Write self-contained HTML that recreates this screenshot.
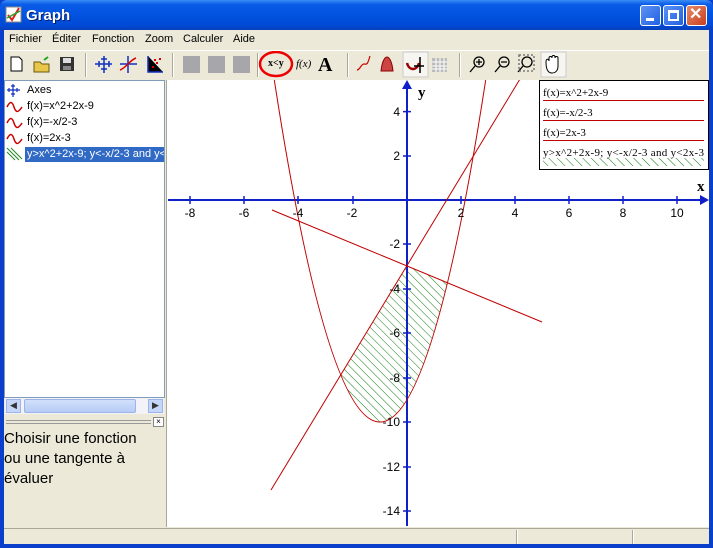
<!DOCTYPE html>
<html><head><meta charset="utf-8"><style>
*{margin:0;padding:0;box-sizing:border-box}
body{width:713px;height:548px;overflow:hidden;background:#0A3FCC;font-family:"Liberation Sans",sans-serif;position:relative}
.abs{position:absolute}
#title{left:0;top:0;width:713px;height:30px;background:linear-gradient(#3A8CF5 0%,#0A5BE8 15%,#0254E0 50%,#0049D6 85%,#0A3FB8 100%);border-radius:7px 7px 0 0}
#title .t{left:26px;top:7px;color:#fff;font-weight:bold;font-size:15px;text-shadow:1px 1px #0a1e6e}
.btn{top:5px;width:21px;height:21px;border:1px solid #fff;border-radius:3px;background:linear-gradient(135deg,#5d93f5,#2260e0)}
#client{left:4px;top:30px;width:705px;height:514px;background:#ECE9D8}
#menu{left:4px;top:30px;width:705px;height:19px;background:#ECE9D8;font-size:11px;color:#000}
#menu span{position:absolute;top:3px}
#tb{left:4px;top:50px;width:705px;height:29px;background:#ECE9D8;border-top:1px solid #fff}
.sep{top:53px;width:2px;height:24px;border-left:1px solid #ACA899;border-right:1px solid #fff}
.gs{top:56px;width:17px;height:17px;background:#A7A6AA}
#list{left:4px;top:80px;width:161px;height:318px;background:#fff;border:1px solid #7F9DB9;font-size:11px}
#list div{position:absolute;left:22px}
#plot{left:166px;top:80px;width:543px;height:447px;background:#fff;border-left:1px solid #ACA899}
#status{left:4px;top:528px;width:705px;height:16px;background:#ECE9D8;border-top:1px solid #ACA899}
</style></head><body>
<div id="title" class="abs">
<svg class="abs" style="left:5px;top:6px" width="17" height="17"><rect x="1" y="1" width="15" height="15" fill="#fff" stroke="#888"/><path d="M3 9 L7 14 L14 2" stroke="#d22" stroke-width="2" fill="none"/><path d="M2 12 L15 5" stroke="#2a2" stroke-width="1.5"/></svg>
<div class="abs t">Graph</div>
<div class="abs btn" style="left:640px"><div class="abs" style="left:5px;top:12px;width:8px;height:3px;background:#fff"></div></div>
<div class="abs btn" style="left:663px"><div class="abs" style="left:4px;top:4px;width:11px;height:11px;border:2px solid #fff;border-top-width:3px"></div></div>
<div class="abs btn" style="left:686px;background:linear-gradient(135deg,#e88a6a,#c8401e)"><div class="abs" style="left:2px;top:-2px;color:#fff;font-weight:bold;font-size:16px">✕</div></div>
</div>
<div id="client" class="abs"></div>
<div id="menu" class="abs"><span style="left:5px">Fichier</span><span style="left:48px">Éditer</span><span style="left:88px">Fonction</span><span style="left:141px">Zoom</span><span style="left:179px">Calculer</span><span style="left:229px">Aide</span></div>
<div id="tb" class="abs"></div>
<svg class="abs" style="left:0;top:50px" width="713" height="30">
<path d="M11 7h8l3 3v11h-11z" fill="#fff" stroke="#000"/>
<path d="M34 12h6l2 2h7v8h-15z" fill="#e8c64a" stroke="#6a5a10"/><path d="M44 10l4-3" stroke="#2a2" stroke-width="2"/>
<rect x="60" y="7" width="14" height="14" fill="#333"/><rect x="63" y="8" width="8" height="5" fill="#ddd"/><rect x="63" y="16" width="8" height="4" fill="#888"/>
<g stroke="#1030c0" stroke-width="1.5"><path d="M104 6v17M95 14h17M101 9h6M101 19h6M99 11v6M109 11v6"/></g>
<g stroke="#1030c0" stroke-width="1.5"><path d="M128 6v17M120 14h17"/></g><path d="M120 20C126 18 130 10 136 8" stroke="#d00" fill="none" stroke-width="1.5"/>
<g stroke="#1030c0" stroke-width="1.5"><path d="M148 6v16h15"/></g><g fill="#d00"><rect x="152" y="16" width="2" height="2"/><rect x="156" y="12" width="2" height="2"/><rect x="159" y="8" width="2" height="2"/><rect x="154" y="9" width="2" height="2"/></g>
<path d="M357 20c3 0 4-6 7-6s3 2 6-8" stroke="#c00" fill="none" stroke-width="1.2"/>
<path d="M381 21c1-10 4-14 6-14s5 4 6 14z" fill="#c44" stroke="#800"/>
<rect x="403" y="2" width="25" height="25" fill="#f6f5f0" stroke="#ccc"/>
<path d="M407 13c2 8 10 8 12 0" stroke="#900" stroke-width="2.5" fill="none"/><path d="M420 7v16M414 16h10" stroke="#000" stroke-width="1.5"/>
<rect x="432" y="8" width="15" height="14" fill="#bbb"/><g stroke="#fff"><path d="M432 12h15M432 16h15M432 19h15M436 8v14M440 8v14M444 8v14"/></g>
<g stroke="#000" stroke-width="1.3" fill="none"><circle cx="479" cy="12" r="5"/><path d="M475 16l-5 6M476 12h6M479 9v6"/><circle cx="504" cy="12" r="5"/><path d="M500 16l-5 6M501 12h6"/><circle cx="527" cy="12" r="5"/><path d="M523 16l-5 6"/><rect x="519" y="5" width="15" height="16" stroke-dasharray="2 2" stroke="#666"/></g>
<rect x="541" y="2" width="25" height="25" fill="#f6f5f0" stroke="#ccc"/><path d="M546 12c0-4 3-3 3-1v-3c0-2 3-2 3 0v-1c0-2 3-2 3 0v1c0-2 3-2 3 0v8c0 4-2 7-6 7s-6-4-6-11z" fill="#fff" stroke="#000"/>
</svg>
<div class="abs sep" style="left:85px"></div><div class="abs sep" style="left:172px"></div><div class="abs sep" style="left:257px"></div><div class="abs sep" style="left:347px"></div><div class="abs sep" style="left:459px"></div>
<div class="abs gs" style="left:183px"></div><div class="abs gs" style="left:208px"></div><div class="abs gs" style="left:233px"></div>
<div class="abs" style="left:268px;top:58px;font-family:'Liberation Serif',serif;font-size:10px;font-weight:bold">x&lt;y</div>
<svg class="abs" style="left:258px;top:51px" width="40" height="28"><ellipse cx="18" cy="13" rx="16" ry="12" fill="none" stroke="#e00" stroke-width="2.5"/></svg>
<div class="abs" style="left:296px;top:58px;font-family:'Liberation Serif',serif;font-style:italic;font-size:11px">f(x)</div>
<div class="abs" style="left:318px;top:54px;font-family:'Liberation Serif',serif;font-weight:bold;font-size:20px">A</div>

<div id="list" class="abs">
<svg class="abs" style="left:1px;top:2px" width="18" height="80"><g stroke="#1030c0" stroke-width="1.2"><path d="M7 1v13M1 7h13M5 3h4M5 11h4M3 5v4M11 5v4"/></g><g stroke="#c00" stroke-width="1.5" fill="none"><path d="M1 24c3-6 5-6 7 0s4 6 8 0"/><path d="M1 40c3-6 5-6 7 0s4 6 8 0"/><path d="M1 56c3-6 5-6 7 0s4 6 8 0"/></g><g stroke="#282" ><path d="M1 65l12 12M5 65l11 11M1 69l8 8"/></g></svg>
<div style="top:3px">Axes</div><div style="top:19px">f(x)=x^2+2x-9</div><div style="top:35px">f(x)=-x/2-3</div><div style="top:51px">f(x)=2x-3</div>
<div style="top:66px;left:20px;width:139px;height:15px;background:#316AC5;color:#fff;white-space:nowrap;overflow:hidden;padding-left:2px;line-height:15px">y&gt;x^2+2x-9; y&lt;-x/2-3 and y&lt;2x-3</div>
</div>
<div class="abs" style="left:5px;top:398px;width:159px;height:16px;background:#F3F2F8">
<div class="abs" style="left:1px;top:1px;width:15px;height:14px;background:#C6D6F9;border:1px solid #9DB4E8;font-size:9px;text-align:center;color:#333">◀</div>
<div class="abs" style="left:19px;top:1px;width:112px;height:14px;background:linear-gradient(#D2E0FB,#B6CCF6);border:1px solid #9DB4E8;border-radius:2px"></div>
<div class="abs" style="left:143px;top:1px;width:15px;height:14px;background:#C6D6F9;border:1px solid #9DB4E8;font-size:9px;text-align:center;color:#333">▶</div></div>
<div class="abs" style="left:6px;top:420px;width:145px;height:4px;border-top:1px solid #999;border-bottom:1px solid #999"></div>
<div class="abs" style="left:153px;top:417px;width:11px;height:10px;border:1px solid #888;font-size:8px;line-height:8px;text-align:center;background:#fff">×</div>
<div class="abs" style="left:4px;top:429px;font-size:15px;line-height:20px;color:#000">Choisir une fonction<br>ou une tangente à<br>évaluer</div>

<div id="plot" class="abs"></div>
<svg class="abs" style="left:0;top:0" width="713" height="548">
<defs><clipPath id="c"><rect x="167" y="80" width="542" height="447"/></clipPath>
<pattern id="h" width="6" height="6" patternUnits="userSpaceOnUse" patternTransform="rotate(-45)"><line x1="0" y1="0" x2="0" y2="6" stroke="#0f7a0f" stroke-width="1"/></pattern></defs>
<g clip-path="url(#c)">
<path d="M340.9 375.1 L407 266 L447.5 282.6 Q394.2 502.7 340.9 375.1Z" fill="url(#h)"/>
<g stroke="#1020c8" stroke-width="2" fill="none"><path d="M168 200H704M407 526V86"/></g>
<path d="M709 200l-9-5v10z M407 80l-5 9h10z" fill="#1020c8"/>
<g stroke="#1020c8" stroke-width="1.5"><path d="M190 196v8M244 196v8M298 196v8M353 196v8M461 196v8M515 196v8M569 196v8M623 196v8M677 196v8M403 111.6h8M403 156h8M403 244h8M403 289h8M403 333h8M403 378h8M403 422h8M403 467h8M403 511h8"/></g>
<g stroke="#c00000" stroke-width="1" fill="none">
<path d="M274.3 80.1 Q380 764 485.7 80.1"/>
<path d="M272 210 L542 322"/>
<path d="M271 490 L520 79"/>
</g>
<g font-family="Liberation Sans,sans-serif" font-size="12" text-anchor="middle" fill="#000">
<text x="190" y="217">-8</text><text x="244" y="217">-6</text><text x="298" y="217">-4</text><text x="352" y="217">-2</text><text x="461" y="217">2</text><text x="515" y="217">4</text><text x="569" y="217">6</text><text x="623" y="217">8</text><text x="677" y="217">10</text>
<g text-anchor="end"><text x="400" y="116">4</text><text x="400" y="160">2</text><text x="400" y="248">-2</text><text x="400" y="293">-4</text><text x="400" y="337">-6</text><text x="400" y="382">-8</text><text x="400" y="426">-10</text><text x="400" y="471">-12</text><text x="400" y="515">-14</text></g>
</g>
<g font-family="Liberation Serif,serif" font-weight="bold" font-size="15"><text x="418" y="97">y</text><text x="697" y="191">x</text></g>
<rect x="539.5" y="80.5" width="169" height="89" fill="#fff" stroke="#000"/>
<g font-family="Liberation Serif,serif" font-size="11" fill="#000"><text x="543" y="96">f(x)=x^2+2x-9</text><text x="543" y="116">f(x)=-x/2-3</text><text x="543" y="136">f(x)=2x-3</text><text x="543" y="156" textLength="161">y&gt;x^2+2x-9; y&lt;-x/2-3 and y&lt;2x-3</text></g>
<g stroke="#c00000"><path d="M543 100.5H704M543 120.5H704M543 140.5H704"/></g>
<rect x="543" y="158" width="161" height="8" fill="url(#h)"/>
</g>
</svg>
<div id="status" class="abs"><div class="abs" style="left:512px;top:1px;width:2px;height:14px;border-left:1px solid #ACA899;border-right:1px solid #fff"></div><div class="abs" style="left:628px;top:1px;width:2px;height:14px;border-left:1px solid #ACA899;border-right:1px solid #fff"></div></div>
</body></html>
